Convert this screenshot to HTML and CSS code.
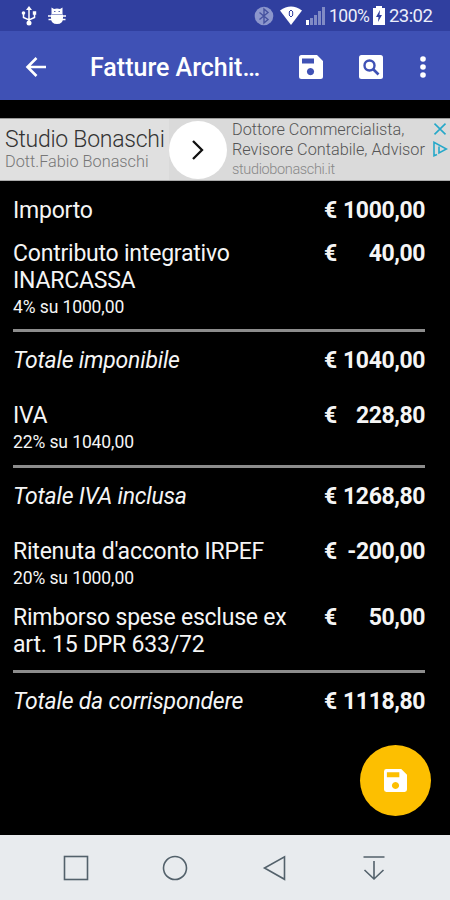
FILE: index.html
```
<!DOCTYPE html>
<html lang="it">
<head>
<meta charset="utf-8">
<title>Fatture Architetti</title>
<link rel="stylesheet" href="styles.css">
</head>
<body>
<div class="screen">
  <header>
    <div class="status">
      <svg class="usb" width="16" height="20" viewBox="0 0 16 20" fill="none" stroke="#fff" stroke-width="1.5"><path d="M8 3v14M2.500 7v4.500L8 14l5.500-2.500V7"/><g fill="#fff" stroke="none"><path d="M8 0l3 4H5z"/><circle cx="8" cy="17" r="2.500"/><circle cx="2.500" cy="7" r="1.800"/><path d="M11.800 5.300h3.400v3.400h-3.400z"/></g></svg>
      <svg class="debug" width="20" height="20" viewBox="0 0 20 20"><path fill="#fff" d="M4.500 1.500l2.500 1.500Q10 2 13 3l2.500-1.500V8h-11zM4 8.500h12v3.500q0 6-6 6t-6-6z"/><path d="M1 10h18M1.500 13.500h17" stroke="#fff" stroke-width="1.500"/><path d="M7.200 5.500h1.200m3.200 0h1.200" stroke="#303f9f" stroke-width="1"/></svg>
      <span class="push"></span>
      <svg class="bt" width="20" height="20" viewBox="0 0 20 20"><circle cx="10" cy="10" r="9.300" fill="#8c96cc"/><path d="M5.500 6.500l8.500 7-4 3.500V3l4 3.500-8.500 7" fill="none" stroke="#46529f" stroke-width="1.400"/></svg>
      <svg class="wifi" width="22" height="19" viewBox="0 0 22 19"><path d="M0 4.500Q11-3.500 22 4.500L11 19z" fill="#fff"/><path d="M9 6l2-2 2 2M9 9l2 2 2-2M9.300 6v3m3.400-3v3" fill="none" stroke="#303f9f"/></svg>
      <svg class="signal" width="19" height="19" viewBox="0 0 19 19"><path d="M4 12h3v7H4zM8 9h3v10H8zM12 5h3v14h-3zM16 1h3v18h-3z" fill="#818bc5"/><path d="M0 14h3v5H0z" fill="#fff"/></svg>
      <span class="percent">100%</span>
      <svg class="battery" width="12" height="19" viewBox="0 0 12 19"><path d="M3 0h6v2h3v17H0V2h3z" fill="#fff"/><path d="M7 4L3 11h2.500L5 16l4-7H6.500z" fill="#303f9f"/></svg>
      <span class="clock">23:02</span>
    </div>
    <div class="toolbar">
      <svg class="back" width="22" height="20" viewBox="0 0 22 20" fill="none" stroke="#fff" stroke-width="2.600"><path d="M21 10H3M11.500 1L2.500 10l9 9"/></svg>
      <h1>Fatture Archit…</h1>
      <svg class="save" width="24" height="24" viewBox="0 0 24 24"><path fill="#fff" fill-rule="evenodd" d="M2.500 0H18l6 6v15.500q0 2.500-2.500 2.500h-19Q0 24 0 21.500v-19Q0 0 2.500 0zM3 3.500v5h12v-5zM11.500 13a3.600 3.600 0 1 0 .01 0z"/></svg>
      <svg class="find" width="24" height="24" viewBox="0 0 24 24"><rect width="24" height="24" rx="2.500" fill="#fff"/><circle cx="10.500" cy="10.500" r="5" fill="none" stroke="#3f51b5" stroke-width="2.400"/><path d="M14 14l5.500 5.500" stroke="#3f51b5" stroke-width="2.600"/></svg>
      <svg class="more" width="6" height="22" viewBox="0 0 6 22" fill="#fff"><circle cx="3" cy="3" r="2.800"/><circle cx="3" cy="11" r="2.800"/><circle cx="3" cy="19" r="2.800"/></svg>
    </div>
  </header>
  <section class="ad">
    <div class="brand"><div class="name">Studio Bonaschi</div><div class="owner">Dott.Fabio Bonaschi</div></div>
    <div class="go"><svg width="14" height="22" viewBox="0 0 14 22"><path d="M2 2l9 9-9 9" fill="none" stroke="#111" stroke-width="2.300"/></svg></div>
    <div class="copy"><div>Dottore Commercialista,</div><div>Revisore Contabile, Advisor</div><div class="url">studiobonaschi.it</div></div>
    <div class="marks">
      <svg width="14" height="12" viewBox="0 0 14 12"><path d="M1.500 .7l11 10.600m0-10.600L1.500 11.300" stroke="#25a8c9" stroke-width="1.600"/></svg>
      <svg width="15" height="16" viewBox="0 0 15 16" fill="none" stroke="#25a8c9" stroke-width="1.600"><path d="M4 13.500l-3 1.200V1.300L13.500 8 6 12V5.500"/></svg>
    </div>
  </section>
  <main>
    <div class="row r1"><div class="label">Importo</div><div class="amount"><span>€</span><span>1000,00</span></div></div>
    <div class="row r2"><div class="label">Contributo integrativo<br>INARCASSA<small>4% su 1000,00</small></div><div class="amount"><span>€</span><span>40,00</span></div></div>
    <div class="row total r3"><div class="label">Totale imponibile</div><div class="amount"><span>€</span><span>1040,00</span></div></div>
    <div class="row r4"><div class="label">IVA<small>22% su 1040,00</small></div><div class="amount"><span>€</span><span>228,80</span></div></div>
    <div class="row total r5"><div class="label">Totale IVA inclusa</div><div class="amount"><span>€</span><span>1268,80</span></div></div>
    <div class="row r6"><div class="label">Ritenuta d'acconto IRPEF<small>20% su 1000,00</small></div><div class="amount"><span>€</span><span>-200,00</span></div></div>
    <div class="row r7"><div class="label">Rimborso spese escluse ex<br>art. 15 DPR 633/72</div><div class="amount"><span>€</span><span>50,00</span></div></div>
    <div class="row total r8"><div class="label">Totale da corrispondere</div><div class="amount"><span>€</span><span>1118,80</span></div></div>
  </main>
  <div class="fab"><svg width="23" height="23" viewBox="0 0 24 24"><path fill="#fff" fill-rule="evenodd" d="M2.500 0H18l6 6v15.500q0 2.500-2.500 2.500h-19Q0 24 0 21.500v-19Q0 0 2.500 0zM3 3.500v5h13v-5zM12 13.500a3.700 3.700 0 1 0 .01 0z"/></svg></div>
  <nav>
    <svg width="26" height="26" viewBox="0 0 26 26"><rect x="1.500" y="1.500" width="23" height="23"/></svg>
    <svg width="26" height="26" viewBox="0 0 26 26"><circle cx="13" cy="13" r="11.500"/></svg>
    <svg width="26" height="26" viewBox="0 0 26 26"><path d="M22.500 1.800v22.500L2.500 13z"/></svg>
    <svg width="26" height="26" viewBox="0 0 26 26"><path d="M2.500 2h21M13 6v18M3.500 15l9.500 9 9.500-9"/></svg>
  </nav>
</div>
</body>
</html>
```
FILE: styles.css
```
* { box-sizing: border-box; }
body { margin: 0; background: #000; font-family: Roboto, sans-serif; }
svg { display: block; flex: none; }
.screen { position: relative; width: 450px; height: 900px; display: flex; flex-direction: column; overflow: hidden; background: #000; color: #f5f5f5; }
.status { height: 31px; display: flex; align-items: center; padding: 0 18px 0 21px; background: #303f9f; white-space: nowrap; color: #eceefa; }
.debug { margin-left: 10px; }
.push { flex: 1; }
.wifi { margin-left: 6px; }
.signal { margin-left: 4px; }
.percent { width: 39px; margin-left: 4px; font-size: 17.5px; letter-spacing: -.5px; }
.battery { margin-left: 5px; }
.clock { width: 43px; margin-left: 4px; font-size: 18.500px; letter-spacing: -.55px; }
.toolbar { height: 69px; display: flex; align-items: center; padding: 2px 24px 0 25px; background: #3f51b5; }
h1 { width: 173px; margin: 2px 0 0 43px; font-size: 25px; font-weight: 500; line-height: 32px; color: #fff; white-space: nowrap; }
.save { margin-left: 36px; }
.find { margin-left: 36px; }
.more { margin-left: 37px; }
.ad { height: 63px; margin-top: 18px; display: flex; align-items: center; border-top: 1px solid #999; border-bottom: 1px solid #aaa; background: #dadada; white-space: nowrap; font-weight: 300; }
.brand { width: 169px; height: 61px; padding: 7px 0 0 5px; background: #e0e0e0; }
.name { color: #333; font-size: 23px; letter-spacing: -.25px; line-height: 27px; }
.owner { color: #777; font-size: 16.3px; line-height: 18px; }
.go { width: 58px; height: 58px; display: flex; align-items: center; justify-content: center; border-radius: 50%; background: #fff; }
.copy { width: 206px; padding-left: 5px; color: #555; font-size: 16.25px; line-height: 20px; }
.url { color: #888; font-size: 14.5px; letter-spacing: -.35px; line-height: 19px; }
.marks { height: 61px; padding-top: 4px; display: flex; flex-direction: column; gap: 6px; }
main { padding: 16px 25px 0 13px; font-size: 23px; line-height: 27px; }
.label { letter-spacing: -.22px; }
.row { display: flex; justify-content: space-between; white-space: nowrap; }
small { display: block; font-size: 17.5px; letter-spacing: -.1px; line-height: 27px; }
.amount { width: 101px; display: flex; justify-content: space-between; font-weight: 700; letter-spacing: -.42px; }
.total { border-top: 3px solid #8c8c8c; padding-top: 15px; font-style: italic; }
.total .amount { font-style: normal; }
.r1 { height: 43px; }
.r2 { height: 89px; }
.r3 { height: 73px; }
.r4 { height: 63px; }
.r5 { height: 73px; }
.r6 { height: 66px; }
.r7 { height: 66px; }
.fab { position: absolute; left: 360px; top: 745px; width: 71px; height: 71px; display: flex; align-items: center; justify-content: center; border-radius: 50%; background: #fdbf00; }
nav { height: 65px; margin-top: auto; padding: 0 63px; display: flex; align-items: center; justify-content: space-between; background: #e8ebee; }
nav svg { fill: none; stroke: #53616b; stroke-width: 1.600; }
```
